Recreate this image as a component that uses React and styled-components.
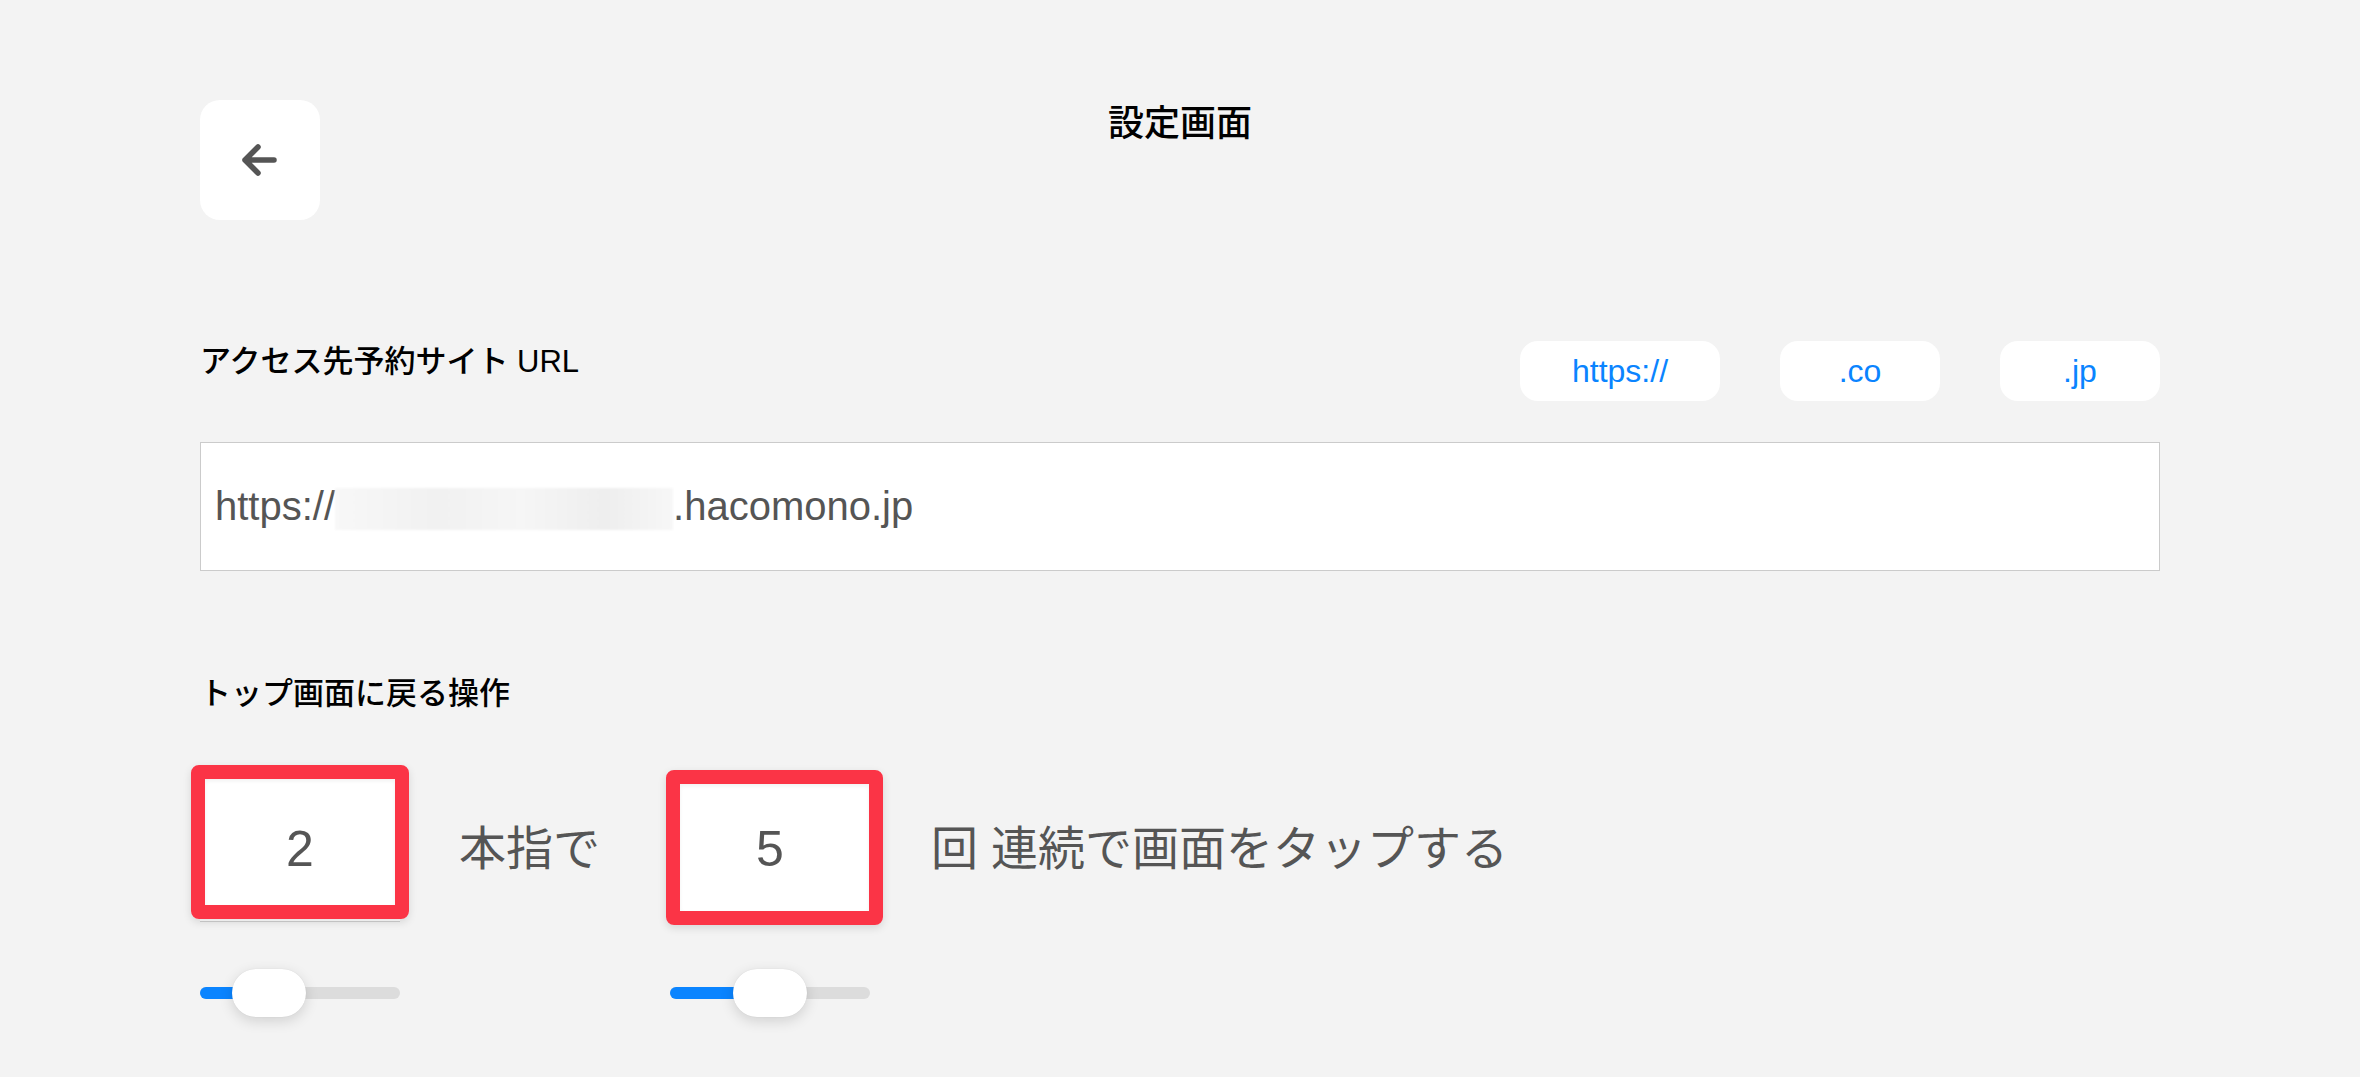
import React from 'react';
import styled, { createGlobalStyle } from 'styled-components';

const GlobalStyle = createGlobalStyle`
    html, body {
        margin: 0;
        background: #f3f3f3;
    }
    body {
        font-family: "Liberation Sans", "Noto Sans CJK JP", sans-serif;
        -webkit-font-smoothing: antialiased;
    }
    * {
        box-sizing: border-box;
    }
`;

const presets = [
    { label: 'https://', width: 200 },
    { label: '.co', width: 160 },
    { label: '.jp', width: 160 },
];

const Slider = ({ value, min, max }) => {
    const ratio = (value - min) / (max - min);
    const thumbLeft = Math.round(ratio * (200 - 74));
    return (
        <SliderBox>
            <Rail>
                <Fill style={{ width: thumbLeft + 37 }} />
                <Thumb style={{ left: thumbLeft }} />
            </Rail>
        </SliderBox>
    );
};

const App = () => {
    return (
        <Page>
            <GlobalStyle />
            <Header>
                <BackButton aria-label="戻る">
                    <svg width="40" height="40" viewBox="0 0 40 40" fill="none">
                        <path
                            d="M5 20H34M18 7L5 20L18 33"
                            stroke="#555"
                            strokeWidth="5.5"
                            strokeLinecap="round"
                            strokeLinejoin="round"
                        />
                    </svg>
                </BackButton>
                <Title>設定画面</Title>
                <span />
            </Header>

            <UrlSection>
                <SectionHead>
                    <Label>アクセス先予約サイト URL</Label>
                    <Presets>
                        {presets.map(p => (
                            <Preset key={p.label} $width={p.width}>{p.label}</Preset>
                        ))}
                    </Presets>
                </SectionHead>
                <UrlField>
                    https://<Masked />.hacomono.jp
                </UrlField>
            </UrlSection>

            <TapSection>
                <Label>トップ画面に戻る操作</Label>
                <TapRow>
                    <Column>
                        <NumberBox>
                            2
                            <Highlight $top={-11} $left={-9} $right={-9} $bottom={2} />
                        </NumberBox>
                        <Slider value={2} min={1} max={5} />
                    </Column>
                    <Unit $left={59} $right={70}>本指で</Unit>
                    <Column>
                        <NumberBox>
                            5
                            <Highlight $top={-6} $left={-4} $right={-13} $bottom={-4} />
                        </NumberBox>
                        <Slider value={5} min={1} max={9} />
                    </Column>
                    <Unit $left={61} $right={0}>回 連続で画面をタップする</Unit>
                </TapRow>
            </TapSection>
        </Page>
    );
};

export default App;

const Page = styled.div`
    min-height: 100vh;
    padding: 100px 200px 0;
    background: #f3f3f3;
`;

const Header = styled.header`
    display: grid;
    grid-template-columns: 120px 1fr 120px;
    align-items: start;
`;

const BackButton = styled.button`
    width: 120px;
    height: 120px;
    border: none;
    border-radius: 20px;
    background: #fff;
    display: flex;
    align-items: center;
    justify-content: center;
    padding: 0;
    cursor: pointer;
`;

const Title = styled.h1`
    margin: 0;
    text-align: center;
    font-size: 36px;
    line-height: 48px;
    font-weight: 500;
    color: #000;
`;

const UrlSection = styled.section`
    margin-top: 122px;
`;

const SectionHead = styled.div`
    display: flex;
    justify-content: space-between;
    align-items: flex-start;
`;

const Label = styled.h2`
    margin: 0;
    font-size: 31px;
    line-height: 40px;
    font-weight: 500;
    color: #000;
`;

const Presets = styled.div`
    display: flex;
    gap: 60px;
    margin-top: -1px;
`;

const Preset = styled.button`
    width: ${props => props.$width}px;
    height: 60px;
    border: none;
    border-radius: 18px;
    background: #fff;
    color: #0a84ff;
    font-family: inherit;
    font-size: 32px;
    line-height: 60px;
    padding: 0;
    cursor: pointer;
`;

const UrlField = styled.div`
    margin-top: 41px;
    height: 129px;
    display: flex;
    align-items: center;
    padding-left: 14px;
    background: #fff;
    border: 1px solid #cbcbcb;
    font-size: 40px;
    color: #555;
    white-space: pre;
`;

const Masked = styled.span`
    display: inline-block;
    width: 338px;
    height: 42px;
    margin-top: 4px;
    background: linear-gradient(90deg, #f8f8f8 0%, #f1f1f1 30%, #f6f6f6 55%, #eeeeee 80%, #f7f7f7 100%);
    filter: blur(1px);
`;

const TapSection = styled.section`
    margin-top: 103px;
`;

const TapRow = styled.div`
    display: flex;
    align-items: flex-start;
    margin-top: 62px;
`;

const Column = styled.div`
    width: 200px;
    display: flex;
    flex-direction: column;
`;

const NumberBox = styled.div`
    position: relative;
    height: 146px;
    display: flex;
    align-items: center;
    justify-content: center;
    background: #fff;
    border-bottom: 1px solid #cfcfcf;
    font-size: 50px;
    color: #555;
`;

const Highlight = styled.div`
    position: absolute;
    top: ${props => props.$top}px;
    left: ${props => props.$left}px;
    right: ${props => props.$right}px;
    bottom: ${props => props.$bottom}px;
    border: 14px solid #fb3446;
    border-radius: 8px;
    box-shadow: 0 3px 8px rgba(0, 0, 0, 0.12), inset 0 2px 4px rgba(0, 0, 0, 0.06);
    pointer-events: none;
`;

const Unit = styled.span`
    margin: 0 ${props => props.$right}px 0 ${props => props.$left}px;
    font-size: 47px;
    line-height: 146px;
    color: #555;
    white-space: nowrap;
`;

const SliderBox = styled.div`
    margin-top: 45px;
    height: 52px;
    display: flex;
    align-items: center;
`;

const Rail = styled.div`
    position: relative;
    width: 100%;
    height: 12px;
    border-radius: 6px;
    background: #dcdcdc;
`;

const Fill = styled.div`
    height: 100%;
    border-radius: 6px;
    background: #0a84ff;
`;

const Thumb = styled.div`
    position: absolute;
    top: 50%;
    width: 74px;
    height: 48px;
    margin-top: -24px;
    border-radius: 24px;
    background: #fff;
    box-shadow: 0 4px 14px rgba(0, 0, 0, 0.14), 0 0 1px rgba(0, 0, 0, 0.12);
`;
